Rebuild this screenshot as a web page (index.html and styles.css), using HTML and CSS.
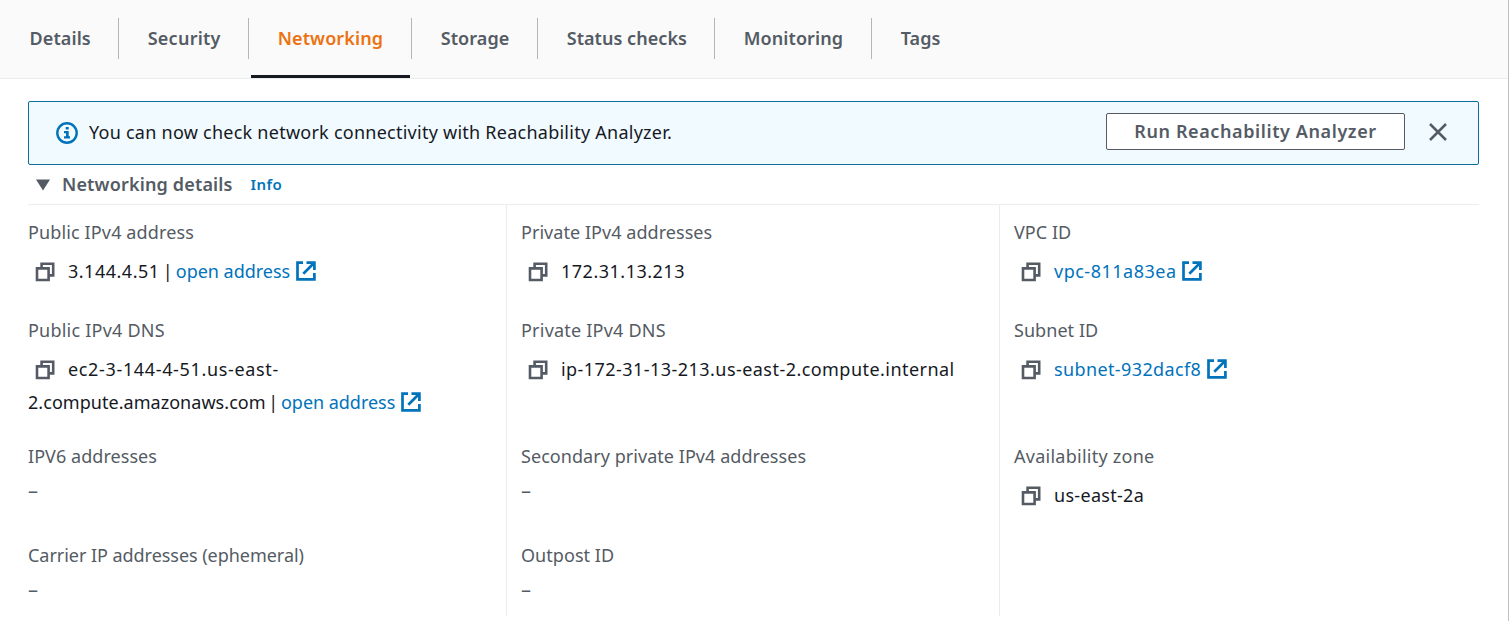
FILE: index.html
```html
<!DOCTYPE html>
<html lang="en">
<head>
<meta charset="utf-8">
<title>Networking</title>
<link rel="stylesheet" href="styles.css">
</head>
<body>
<svg class="sprite" aria-hidden="true">
  <symbol id="copy" viewBox="0 0 20 20"><path d="M6.6 5.5V1.8H18.2V13.4H14.5M2 6.4H13.6V18H2Z" fill="none" stroke="currentColor" stroke-width="2.6"/></symbol>
  <symbol id="external" viewBox="0 0 20 20"><path d="M7 1.6H1.5V18.4H18.4V12M10.5 1.6H18.4V9M18 2L7.3 12.7" fill="none" stroke="currentColor" stroke-width="2.7"/></symbol>
</svg>
<main class="panel">
  <nav class="tabs">
    <a class="tab details"><span>Details</span></a>
    <a class="tab security"><span>Security</span></a>
    <a class="tab networking active"><span>Networking</span></a>
    <a class="tab storage"><span>Storage</span></a>
    <a class="tab status"><span>Status checks</span></a>
    <a class="tab monitoring"><span>Monitoring</span></a>
    <a class="tab tags"><span>Tags</span></a>
  </nav>
  <section class="content">
    <div class="alert">
      <svg class="info-icon" viewBox="0 0 22 22"><circle cx="11" cy="11" r="9.7" fill="none" stroke="currentColor" stroke-width="2.4"/><path d="M9.7 5h3v2.5h-3zM8 9.1h4.7v5.1H14v2.2H8v-2.2h2v-3H8z" fill="currentColor"/></svg>
      <span class="message">You can now check network connectivity with Reachability Analyzer.</span>
      <button class="run"><span>Run Reachability Analyzer</span></button>
      <svg class="close" viewBox="0 0 18 18"><path d="M1 1L17 17M17 1L1 17" stroke="currentColor" stroke-width="2.5"/></svg>
    </div>
    <header class="section-head">
      <svg class="caret" viewBox="0 0 14 12"><path d="M0 .5H14L7 11.5Z" fill="currentColor"/></svg>
      <h2>Networking details</h2>
      <a class="info">Info</a>
    </header>
    <div class="columns">
      <div class="column">
        <div class="field"><div class="label public-ip">Public IPv4 address</div><div class="value"><svg class="copy"><use href="#copy"/></svg><span class="digits">3.144.4.51 |</span> <a class="open">open address</a><svg class="ext"><use href="#external"/></svg></div></div>
        <div class="field"><div class="label dns">Public IPv4 DNS</div><div class="value"><svg class="copy"><use href="#copy"/></svg><span class="host">ec2-3-144-4-51.us-east-</span><br><span class="host-end">2.compute.amazonaws.com |</span> <a class="open">open address</a><svg class="ext"><use href="#external"/></svg></div></div>
        <div class="field"><div class="label">IPV6 addresses</div><div class="value empty">–</div></div>
        <div class="field"><div class="label carrier">Carrier IP addresses (ephemeral)</div><div class="value empty">–</div></div>
      </div>
      <div class="column">
        <div class="field"><div class="label">Private IPv4 addresses</div><div class="value"><svg class="copy"><use href="#copy"/></svg><span class="digits">172.31.13.213</span></div></div>
        <div class="field"><div class="label dns">Private IPv4 DNS</div><div class="value"><svg class="copy"><use href="#copy"/></svg><span class="private-host">ip-172-31-13-213.us-east-2.compute.internal</span></div></div>
        <div class="field"><div class="label">Secondary private IPv4 addresses</div><div class="value empty">–</div></div>
        <div class="field"><div class="label">Outpost ID</div><div class="value empty">–</div></div>
      </div>
      <div class="column">
        <div class="field"><div class="label">VPC ID</div><div class="value"><svg class="copy"><use href="#copy"/></svg><a class="digits">vpc-811a83ea</a><svg class="ext"><use href="#external"/></svg></div></div>
        <div class="field"><div class="label">Subnet ID</div><div class="value"><svg class="copy"><use href="#copy"/></svg><a class="subnet">subnet-932dacf8</a><svg class="ext"><use href="#external"/></svg></div></div>
        <div class="field"><div class="label zone">Availability zone</div><div class="value"><svg class="copy"><use href="#copy"/></svg><span class="zone-name">us-east-2a</span></div></div>
      </div>
    </div>
  </section>
</main>
</body>
</html>
```
FILE: styles.css
```css
* { box-sizing: border-box; }
body { margin: 0; background: #fff; color: #16191f; font: 18px/33px "Noto Sans", sans-serif; overflow: hidden; }
.sprite { display: none; }
.panel { width: 1509px; height: 621px; border-right: 1px solid #bcc2c4; }
.tabs { display: flex; height: 79px; background: #fafafa; border-bottom: 1px solid #eaeded; color: #545b64; font-weight: 600; letter-spacing: .1px; }
.tab { display: flex; height: 78px; padding-top: 18px; }
.tab span { height: 41px; line-height: 41px; border-right: 1px solid #b3b7b8; width: 100%; padding-left: 28.7px; white-space: nowrap; }
.details { width: 119px; }
.details span { padding-left: 29.5px; }
.security { width: 130px; letter-spacing: .25px; }
.networking { width: 163px; }
.storage { width: 126px; }
.status { width: 177px; letter-spacing: .05px; }
.monitoring { width: 157px; }
.tags { width: 120px; }
.tags span { border: 0; }
.active { color: #ec7211; background: linear-gradient(#16191f, #16191f) 2px 75px / 159px 3px no-repeat; }
.content { padding: 22px 29px 0 28px; }
.alert { display: flex; align-items: center; width: 1451px; height: 64px; border: 1px solid #0f6c9f; border-radius: 2px; background: #f1faff; padding: 0 31px 3px 27px; }
.info-icon { width: 22px; height: 22px; color: #0073bb; margin: 3px 11px 0 0; }
.message { white-space: nowrap; letter-spacing: .25px; padding-top: 1px; }
.run { margin-left: auto; width: 299px; height: 37px; border: 1px solid #545b64; border-radius: 2px; background: #fff; color: #545b64; font: 600 18px/33px "Noto Sans", sans-serif; letter-spacing: .6px; padding: 0; white-space: nowrap; }
.close { width: 18px; height: 18px; color: #545b64; margin-left: 24px; }
.section-head { display: flex; align-items: center; height: 40px; width: 1451px; border-bottom: 1px solid #eaeded; color: #545b64; padding-left: 8px; }
.caret { width: 14px; height: 12px; }
h2 { margin: 0 0 0 12px; width: 188.5px; font-size: 18px; font-weight: 600; letter-spacing: .16px; }
.info { font-size: 15px; font-weight: 600; color: #0073bb; letter-spacing: .4px; }
.columns { display: flex; height: 411px; }
.column { display: grid; grid-template-rows: 98px 126px 99px 76px; flex: none; width: 493px; padding-top: 11px; padding-left: 14px; border-left: 1px solid #eaeded; }
.column:first-child { width: 478px; padding-left: 0; border: 0; }
.column:last-child { width: 480px; }
.label { color: #545b64; white-space: nowrap; letter-spacing: .05px; }
.value { margin-top: 6px; white-space: nowrap; word-spacing: -2px; }
.empty { margin-top: 1px; color: #545b64; font-size: 20px; }
.value a { color: #0073bb; }
.value .open { word-spacing: 0; letter-spacing: -.03px; }
.copy { width: 20px; height: 20px; color: #545b64; margin: 0 13px 0 7px; vertical-align: -4px; }
.ext { width: 20px; height: 20px; color: #0073bb; margin-left: 5.5px; vertical-align: -3px; }
.public-ip { letter-spacing: .13px; }
.dns { letter-spacing: .22px; }
.carrier { letter-spacing: -.04px; }
.zone { letter-spacing: .26px; }
.digits { letter-spacing: .5px; }
.host { letter-spacing: .65px; }
.host-end { letter-spacing: .04px; }
.private-host { letter-spacing: .45px; }
.subnet { letter-spacing: .38px; }
.zone-name { letter-spacing: .3px; }
```
